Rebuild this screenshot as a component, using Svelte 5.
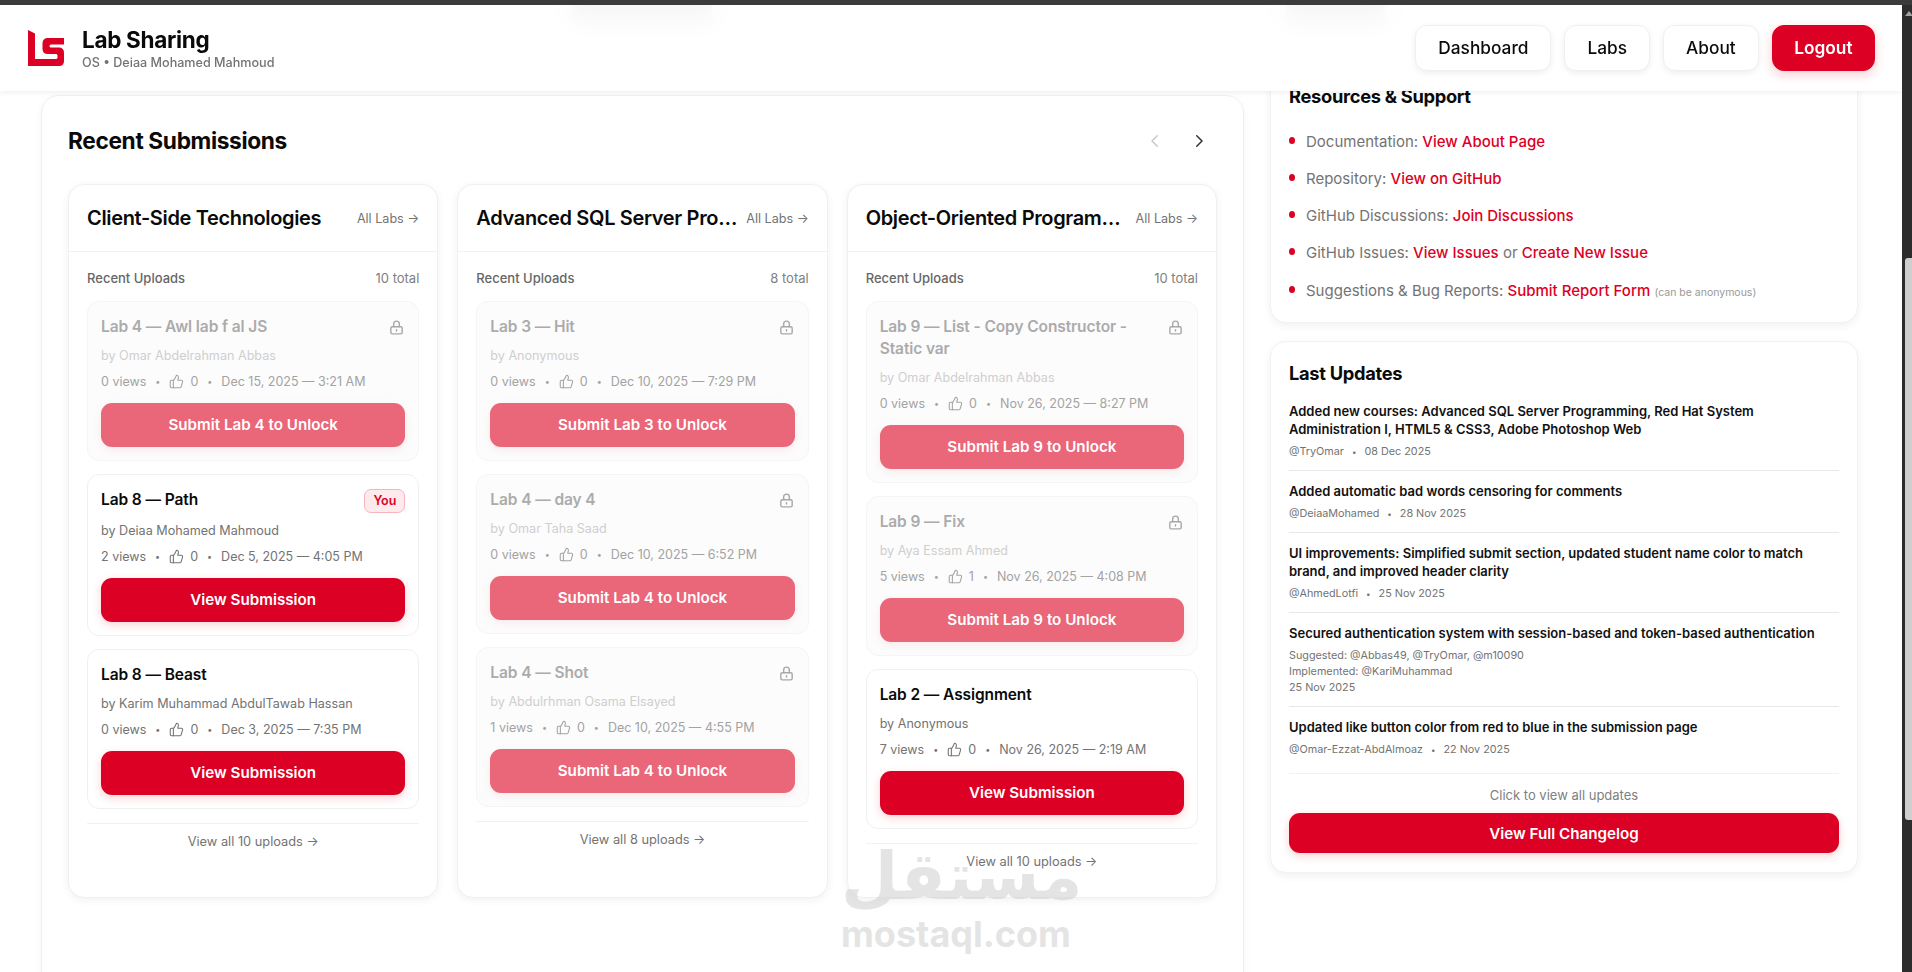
<script>
  const columns = [
    {
      name: 'Client-Side Technologies', total: 10,
      items: [
        { title: 'Lab 4 — Awl lab f al JS', by: 'Omar Abdelrahman Abbas', views: 0, likes: 0, date: 'Dec 15, 2025 — 3:21 AM', lock: 4 },
        { title: 'Lab 8 — Path', by: 'Deiaa Mohamed Mahmoud', views: 2, likes: 0, date: 'Dec 5, 2025 — 4:05 PM', you: true },
        { title: 'Lab 8 — Beast', by: 'Karim Muhammad AbdulTawab Hassan', views: 0, likes: 0, date: 'Dec 3, 2025 — 7:35 PM' }
      ]
    },
    {
      name: 'Advanced SQL Server Programming', total: 8,
      items: [
        { title: 'Lab 3 — Hit', by: 'Anonymous', views: 0, likes: 0, date: 'Dec 10, 2025 — 7:29 PM', lock: 3 },
        { title: 'Lab 4 — day 4', by: 'Omar Taha Saad', views: 0, likes: 0, date: 'Dec 10, 2025 — 6:52 PM', lock: 4 },
        { title: 'Lab 4 — Shot', by: 'Abdulrhman Osama Elsayed', views: 1, likes: 0, date: 'Dec 10, 2025 — 4:55 PM', lock: 4 }
      ]
    },
    {
      name: 'Object-Oriented Programming', total: 10,
      items: [
        { title: 'Lab 9 — List - Copy Constructor - Static var', by: 'Omar Abdelrahman Abbas', views: 0, likes: 0, date: 'Nov 26, 2025 — 8:27 PM', lock: 9 },
        { title: 'Lab 9 — Fix', by: 'Aya Essam Ahmed', views: 5, likes: 1, date: 'Nov 26, 2025 — 4:08 PM', lock: 9 },
        { title: 'Lab 2 — Assignment', by: 'Anonymous', views: 7, likes: 0, date: 'Nov 26, 2025 — 2:19 AM' }
      ]
    }
  ];

  const updates = [
    { title: 'Added new courses: Advanced SQL Server Programming, Red Hat System Administration I, HTML5 & CSS3, Adobe Photoshop Web', who: '@TryOmar', date: '08 Dec 2025' },
    { title: 'Added automatic bad words censoring for comments', who: '@DeiaaMohamed', date: '28 Nov 2025' },
    { title: 'UI improvements: Simplified submit section, updated student name color to match brand, and improved header clarity', who: '@AhmedLotfi', date: '25 Nov 2025' },
    { title: 'Secured authentication system with session-based and token-based authentication', lines: ['Suggested: @Abbas49, @TryOmar, @m10090', 'Implemented: @KariMuhammad', '25 Nov 2025'] },
    { title: 'Updated like button color from red to blue in the submission page', who: '@Omar-Ezzat-AbdAlmoaz', date: '22 Nov 2025' }
  ];
</script>

<div class="window">
  <div class="topstrip"></div>
  <div class="frame">
    <div class="viewport">
      <div class="ghost g1"></div>
      <div class="ghost g2"></div>

      <header class="header">
        <div class="brand">
          <svg class="logo" viewBox="0 0 36 36" width="36" height="36">
            <path d="M0 0 L7 3.5 V29 H15 V36 H0 Z" fill="#dc0024" />
            <path d="M36 8 H20 Q14.5 8 14.5 13.5 V19 Q14.5 24 20 24 H28 Q29.5 24 29.5 25.5 V27.5 Q29.5 29 28 29 H15 V36 H31 Q36 36 36 31 V23 Q36 17.5 31 17.5 H23 Q21.5 17.5 21.5 16 Q21.5 14.5 23 14.5 H36 Z" fill="#dc0024" />
          </svg>
          <div class="brand-text">
            <div class="brand-name">Lab Sharing</div>
            <div class="brand-sub">OS • Deiaa Mohamed Mahmoud</div>
          </div>
        </div>
        <nav class="nav">
          <a class="nav-btn">Dashboard</a>
          <a class="nav-btn">Labs</a>
          <a class="nav-btn">About</a>
          <a class="nav-btn logout">Logout</a>
        </nav>
      </header>

      <div class="content">
        <main class="main-card">
          <div class="main-head">
            <h2>Recent Submissions</h2>
            <div class="arrows">
              <svg viewBox="0 0 24 24" width="18" height="18" class="arrow off"><path d="M15 5l-7 7 7 7" /></svg>
              <svg viewBox="0 0 24 24" width="18" height="18" class="arrow"><path d="M9 5l7 7-7 7" /></svg>
            </div>
          </div>

          <div class="columns">
            {#each columns as col}
              <section class="col">
                <div class="col-head">
                  <h3>{col.name}</h3>
                  <span class="all-labs">All Labs →</span>
                </div>
                <div class="col-body">
                  <div class="uploads-row">
                    <span class="uploads">Recent Uploads</span>
                    <span class="total">{col.total} total</span>
                  </div>
                  <div class="items">
                    {#each col.items as item}
                      <article class="item" class:locked={item.lock}>
                        <div class="item-top">
                          <div class="item-title">{item.title}</div>
                          {#if item.lock}
                            <svg class="lock" viewBox="0 0 24 24" width="17" height="17">
                              <rect x="4" y="11" width="16" height="10" rx="2" />
                              <path d="M8 11V7a4 4 0 0 1 8 0v4" />
                              <path d="M12 15v2" />
                            </svg>
                          {/if}
                          {#if item.you}
                            <span class="you">You</span>
                          {/if}
                        </div>
                        <div class="by">by {item.by}</div>
                        <div class="meta">
                          <span>{item.views} views</span>
                          <span class="dot">•</span>
                          <svg class="thumb" viewBox="0 0 24 24" width="15" height="15">
                            <path d="M7 10v12" />
                            <path d="M15 5.88 14 10h5.83a2 2 0 0 1 1.92 2.56l-2.33 8A2 2 0 0 1 17.5 22H4a2 2 0 0 1-2-2v-8a2 2 0 0 1 2-2h2.76a2 2 0 0 0 1.79-1.11L12 2a3.13 3.13 0 0 1 3 3.88Z" />
                          </svg>
                          <span>{item.likes}</span>
                          <span class="dot">•</span>
                          <span>{item.date}</span>
                        </div>
                        {#if item.lock}
                          <a class="btn soft">Submit Lab {item.lock} to Unlock</a>
                        {:else}
                          <a class="btn">View Submission</a>
                        {/if}
                      </article>
                    {/each}
                  </div>
                  <div class="view-all">View all {col.total} uploads →</div>
                </div>
              </section>
            {/each}
          </div>
        </main>

        <aside class="side">
          <section class="panel resources">
            <h4>Resources &amp; Support</h4>
            <ul>
              <li>Documentation: <a>View About Page</a></li>
              <li>Repository: <a>View on GitHub</a></li>
              <li>GitHub Discussions: <a>Join Discussions</a></li>
              <li>GitHub Issues: <a>View Issues</a> or <a>Create New Issue</a></li>
              <li>Suggestions &amp; Bug Reports: <a>Submit Report Form</a> <small>(can be anonymous)</small></li>
            </ul>
          </section>

          <section class="panel updates">
            <h4>Last Updates</h4>
            {#each updates as u, i}
              <div class="update" class:first={i === 0} class:last={i === updates.length - 1}>
                <div class="u-title">{u.title}</div>
                {#if u.lines}
                  <div class="u-meta lines">
                    {#each u.lines as line}<div>{line}</div>{/each}
                  </div>
                {:else}
                  <div class="u-meta"><span>{u.who}</span><span class="u-dot">•</span><span>{u.date}</span></div>
                {/if}
              </div>
            {/each}
            <div class="click-all">Click to view all updates</div>
            <a class="btn wide">View Full Changelog</a>
          </section>
        </aside>
      </div>

      <div class="watermark" aria-hidden="true">
        <div class="wm-ar">مستقل</div>
        <div class="wm-en">mostaql.com</div>
      </div>
    </div>

    <div class="scrollbar">
      <div class="scroll-up"></div>
      <div class="thumb-bar"></div>
    </div>
  </div>
</div>

<style>
  :global(body) {
    margin: 0;
    background: #fff;
    font-family: Inter, "Liberation Sans", sans-serif;
    color: #0a0a0a;
  }

  .window {
    height: 972px;
    display: flex;
    flex-direction: column;
    overflow: hidden;
  }

  .topstrip {
    height: 5px;
    background: #3b3b3d;
    flex-shrink: 0;
  }

  .frame {
    flex: 1;
    display: flex;
    min-height: 0;
  }

  .viewport {
    flex: 1;
    position: relative;
    overflow: hidden;
    background: #fff;
  }

  .scrollbar {
    width: 10px;
    background: #2d2d2d;
    flex-shrink: 0;
    position: relative;
  }

  .scroll-up {
    position: absolute;
    top: 6px;
    left: 3px;
    width: 0;
    height: 0;
    border-left: 4px solid transparent;
    border-right: 4px solid transparent;
    border-bottom: 5px solid #a3a3a3;
  }

  .thumb-bar {
    position: absolute;
    top: 253px;
    left: 3px;
    right: 0;
    height: 562px;
    background: #cfcfcf;
    border-radius: 3px 0 0 3px;
  }

  .ghost {
    position: absolute;
    top: 0;
    height: 18px;
    background: #aaa;
  }
  .g1 { left: 572px; width: 140px; }
  .g2 { left: 1285px; width: 100px; }

  .header {
    position: absolute;
    top: 0;
    left: 0;
    right: 0;
    height: 86px;
    z-index: 5;
    display: flex;
    align-items: center;
    justify-content: space-between;
    padding: 0 27px 0 28px;
    box-sizing: border-box;
    background: rgba(255, 255, 255, 0.9);
    backdrop-filter: blur(12px);
    box-shadow: 0 1px 6px rgba(0, 0, 0, 0.08);
  }

  .brand {
    display: flex;
    align-items: center;
    gap: 18px;
  }

  .logo {
    flex-shrink: 0;
  }

  .brand-text {
    padding-top: 2px;
  }

  .brand-name {
    font-size: 22.5px;
    font-weight: 700;
    line-height: 28px;
    letter-spacing: -0.3px;
  }

  .brand-sub {
    font-size: 12.6px;
    font-weight: 500;
    color: #737373;
    line-height: 18px;
  }

  .nav {
    display: flex;
    align-items: center;
    gap: 13px;
  }

  .nav-btn {
    height: 46px;
    box-sizing: border-box;
    padding: 0 22px 2px;
    display: flex;
    align-items: center;
    font-size: 17.3px;
    font-weight: 500;
    border-radius: 12px;
    background: #fff;
    border: 1px solid #f0f0f0;
    box-shadow: 0 2px 6px rgba(0, 0, 0, 0.07);
  }

  .nav-btn.logout {
    background: #dc0024;
    border-color: #dc0024;
    color: #fff;
    font-weight: 600;
    padding: 0 21.5px 2px;
    box-shadow: 0 4px 12px rgba(220, 0, 36, 0.2);
  }

  .content {
    display: grid;
    grid-template-columns: 1203px 588px;
    gap: 26px;
    padding: 62.5px 0 0 41px;
    align-items: start;
  }

  .main-card {
    margin-top: 27.5px;
    height: 1100px;
    box-sizing: border-box;
    padding: 26px 26px;
    background: #fff;
    border: 1px solid #f0f0f0;
    border-radius: 18px;
    box-shadow: 0 2px 8px rgba(0, 0, 0, 0.04);
  }

  .main-head {
    display: flex;
    align-items: center;
    justify-content: space-between;
    height: 37px;
    margin-bottom: 25px;
  }

  h2 {
    margin: 0;
    font-size: 22.7px;
    font-weight: 700;
    letter-spacing: -0.35px;
  }

  .arrows {
    display: flex;
    gap: 26px;
    margin-right: 9px;
  }

  .arrow {
    fill: none;
    stroke: #333;
    stroke-width: 2;
    stroke-linecap: round;
    stroke-linejoin: round;
  }

  .arrow.off {
    stroke: #c8c8c8;
  }

  .columns {
    display: grid;
    grid-template-columns: repeat(3, 1fr);
    gap: 19px;
    height: 714px;
  }

  .col {
    min-width: 0;
    border: 1px solid #f0f0f0;
    border-radius: 16px;
    background: #fff;
    box-shadow: 0 2px 8px rgba(0, 0, 0, 0.06);
  }

  .col-head {
    height: 67px;
    box-sizing: border-box;
    padding: 0 18px;
    display: flex;
    align-items: center;
    justify-content: space-between;
    gap: 6px;
    border-bottom: 1px solid #f2f2f2;
  }

  h3 {
    margin: 0;
    font-size: 20px;
    font-weight: 600;
    white-space: nowrap;
    overflow: hidden;
    text-overflow: ellipsis;
    letter-spacing: -0.35px;
  }

  .all-labs {
    flex-shrink: 0;
    font-size: 12.6px;
    color: #737373;
  }

  .col-body {
    padding: 17px 18px 0;
  }

  .uploads-row {
    display: flex;
    justify-content: space-between;
    align-items: center;
    height: 18px;
    margin-bottom: 14px;
    font-size: 13px;
    color: #666;
  }

  .uploads { font-weight: 500; }
  .total { color: #808080; }

  .items {
    display: flex;
    flex-direction: column;
    gap: 13px;
  }

  .item {
    box-sizing: border-box;
    padding: 13.5px 13px;
    border: 1px solid #f0f0f0;
    border-radius: 12px;
    background: #fff;
  }

  .item.locked {
    background: #fcfcfc;
    border-color: #f5f5f5;
  }

  .item-top {
    display: flex;
    align-items: flex-start;
    justify-content: space-between;
    gap: 12px;
    min-height: 22px;
  }

  .item-title {
    font-size: 15.5px;
    line-height: 22px;
    font-weight: 600;
    letter-spacing: -0.1px;
  }

  .locked .item-title { color: #ababab; }

  .lock {
    flex-shrink: 0;
    margin-top: 3px;
    fill: none;
    stroke: #a8a8a8;
    stroke-width: 2;
    stroke-linecap: round;
  }

  .you {
    font-size: 12.5px;
    font-weight: 600;
    color: #dc0024;
    background: #fdeaec;
    border: 1px solid #f7b4bf;
    border-radius: 7px;
    padding: 2px 8px;
    line-height: 18px;
  }

  .by {
    margin-top: 9px;
    font-size: 12.6px;
    line-height: 18px;
    color: #737373;
  }

  .locked .by { color: #cfcfcf; }

  .meta {
    display: flex;
    align-items: center;
    margin-top: 8px;
    height: 18px;
    font-size: 12.5px;
    color: #737373;
    gap: 6px;
    white-space: nowrap;
  }

  .locked .meta { color: #a3a3a3; }

  .dot {
    font-size: 9px;
    margin: 0 3px;
  }

  .thumb {
    fill: none;
    stroke: currentColor;
    stroke-width: 1.7;
    stroke-linecap: round;
    stroke-linejoin: round;
  }

  .btn {
    display: flex;
    align-items: center;
    justify-content: center;
    height: 44px;
    margin-top: 12px;
    border-radius: 11px;
    background: #dc0024;
    color: #fff;
    font-size: 15.2px;
    font-weight: 600;
    box-shadow: 0 3px 10px rgba(220, 0, 36, 0.18);
  }

  .btn.soft {
    background: #ea6679;
    box-shadow: 0 3px 10px rgba(220, 0, 36, 0.08);
  }

  .view-all {
    margin-top: 14px;
    padding-top: 8px;
    border-top: 1px solid #f2f2f2;
    text-align: center;
    font-size: 12.8px;
    line-height: 20px;
    color: #737373;
  }

  .side {
    display: flex;
    flex-direction: column;
    gap: 18px;
  }

  .panel {
    box-sizing: border-box;
    background: #fff;
    border: 1px solid #f2f2f2;
    border-radius: 16px;
    box-shadow: 0 3px 8px rgba(0, 0, 0, 0.06);
  }

  .resources {
    padding: 15px 18px 18px;
  }

  h4 {
    margin: 0;
    font-size: 18.3px;
    font-weight: 700;
    line-height: 24px;
    letter-spacing: -0.3px;
  }

  .resources ul {
    list-style: none;
    margin: 21px 0 0;
    padding: 0 0 0 17px;
  }

  .resources li {
    position: relative;
    font-size: 15px;
    line-height: 26px;
    height: 37.3px;
    color: #737373;
    white-space: nowrap;
  }

  .resources li:last-child {
    height: 26px;
  }

  .resources li::before {
    content: '';
    position: absolute;
    left: -17px;
    top: 8px;
    width: 6px;
    height: 7px;
    border-radius: 50%;
    background: #dc0024;
  }

  .resources a {
    color: #dc0024;
    font-size: 15px;
    font-weight: 500;
  }

  small {
    font-size: 10.5px;
    color: #999;
  }

  .updates {
    padding: 19px 18px 19px;
  }

  .update {
    padding: 11px 0 10px;
    border-bottom: 1px solid #e8e8e8;
  }

  .update.first {
    padding-top: 17.5px;
  }

  .update.last {
    padding-bottom: 15px;
    border-bottom-color: #f2f2f2;
  }

  .u-title {
    font-size: 13px;
    line-height: 18px;
    font-weight: 600;
    color: #111;
  }

  .u-meta {
    margin-top: 6px;
    display: flex;
    align-items: center;
    gap: 8px;
    font-size: 10.8px;
    line-height: 16px;
    color: #737373;
  }

  .u-meta.lines {
    display: block;
  }

  .u-dot {
    font-size: 8px;
  }

  .click-all {
    margin-top: 12px;
    text-align: center;
    font-size: 13px;
    line-height: 18px;
    color: #808080;
  }

  .btn.wide {
    margin-top: 9px;
    height: 40px;
  }

  .watermark {
    position: absolute;
    left: 841px;
    top: 830px;
    width: 230px;
    text-align: center;
    opacity: 0.55;
    color: #cfcfcf;
    z-index: 2;
    pointer-events: none;
  }

  .wm-ar {
    font-family: "DejaVu Sans", sans-serif;
    font-weight: 700;
    font-size: 66px;
    line-height: 84px;
    padding-right: 8px;
  }

  .wm-en {
    font-family: Inter, sans-serif;
    font-weight: 700;
    font-size: 36px;
    line-height: 30px;
  }
</style>
